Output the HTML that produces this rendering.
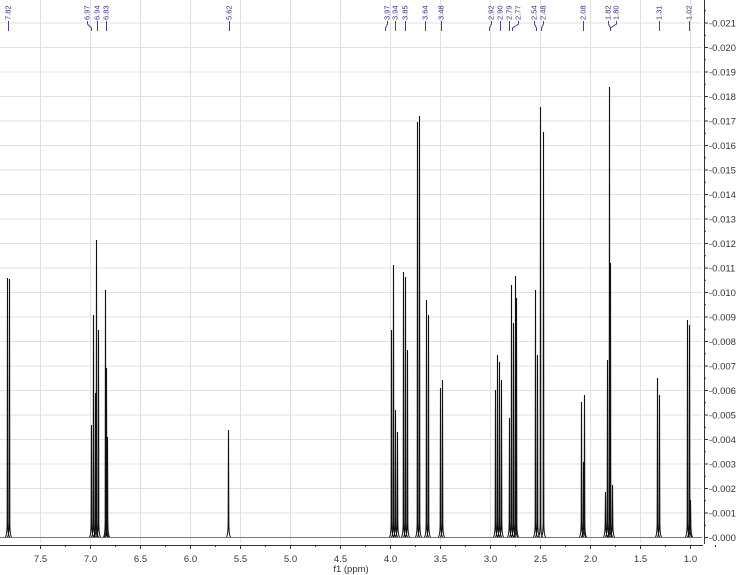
<!DOCTYPE html>
<html><head><meta charset="utf-8"><style>
html,body{margin:0;padding:0;background:#fff;width:750px;height:575px;overflow:hidden}
svg{display:block}
</style></head><body>
<svg width="750" height="575" xmlns="http://www.w3.org/2000/svg" font-family="Liberation Sans, sans-serif">
<rect width="750" height="575" fill="#fff"/>
<g stroke="#e0e0e0" stroke-width="1" id="grid"></g>
<line x1="0" y1="537.5" x2="702" y2="537.5" stroke="#777" stroke-width="1"/>
<g id="peaks" stroke="#111" stroke-width="1.1" fill="none"></g>
<g id="labels" fill="#33338a" font-size="7.5" stroke="none"></g>
<g id="llines" stroke="#44449a" stroke-width="1" fill="none"></g>
<line x1="704.5" y1="0" x2="704.5" y2="544" stroke="#333"/>
<line x1="0" y1="545.5" x2="703" y2="545.5" stroke="#333"/>
<g id="axes" font-size="9.5" fill="#333"></g>
<text x="351" y="572" font-size="9.5" fill="#333" text-anchor="middle">f1 (ppm)</text>
</svg>
<script>
var NS="http://www.w3.org/2000/svg";
function el(p,t,a,txt){var e=document.createElementNS(NS,t);for(var k in a)e.setAttribute(k,a[k]);if(txt)e.textContent=txt;document.getElementById(p).appendChild(e);return e;}
for(var k=0;k<=21;k++){var y=537.5-24.5*k;el('grid','line',{x1:0,y1:y,x2:702,y2:y});
 el('axes','line',{x1:704,y1:y,x2:708,y2:y,stroke:'#333'});
 el('axes','line',{x1:704,y1:y-12.25,x2:706,y2:y-12.25,stroke:'#333'});
 el('axes','text',{x:709,y:y+3.5},(k<10?'-0.00':'-0.0')+k);}
for(var i=0;i<14;i++){var x=40.5+50*i;el('grid','line',{x1:x,y1:0,x2:x,y2:543});
 el('axes','line',{x1:x,y1:545,x2:x,y2:549,stroke:'#333'});
 el('axes','line',{x1:x+25,y1:545,x2:x+25,y2:547,stroke:'#333'});
 el('axes','text',{x:x,y:562,'text-anchor':'middle'},(7.5-0.5*i).toFixed(1));}
var P=[[7,278],[9,279],[91,425],[93,315],[95,393],[96,240],[98,330],[105,290],[106,368],[107,437],
[228,430],[391,330],[393,265],[395,410],[397,432],[403,272],[405,277],[407,350],[417,122],[419,116],
[426,300],[428,315],[440,388],[442,380],[495,390],[497,355],[499,362],[501,380],[509,418],[511,285],[513,323],[515,276],[516,298],
[535,290],[537,355],[540,107],[543,132],[581,402],[583,462],[584,395],[605,492],[607,360],[609,87],[610,263],[612,485],
[657,378],[659,395],[687,320],[689,325],[690,500]];
P.forEach(function(p){var x=p[0]+.5;el('peaks','path',{d:'M'+(x-2.2)+' 537 Q'+(x-0.3)+' 536 '+(x-0.3)+' 520 L'+x+' '+p[1]+' L'+(x+0.3)+' 520 Q'+(x+0.3)+' 536 '+(x+2.2)+' 537'});});
var L=[[8,'7.82',8],[87,'6.97',91],[97,'6.94',97],[106,'6.83',106],[229,'5.62',229],[387,'3.97',385],[395,'3.94',395],[405,'3.85',405],[425,'3.64',425],[441,'3.48',441],
[491,'2.92',489],[500,'2.90',500],[509,'2.79',509],[518,'2.77',512],[534,'2.54',536],[543,'2.48',541],[583,'2.08',583],[608,'1.82',610],[616,'1.80',610],[659,'1.31',659],[689,'1.02',689]];
L.forEach(function(l){var x=l[0];el('labels','text',{x:0,y:0,transform:'translate('+(x+2.7)+',20) rotate(-90)'},l[1]);
 el('llines','path',{d:'M'+(x+.5)+' 21 L'+(x+.5)+' 24 L'+(l[2]+.5)+' 28 L'+(l[2]+.5)+' 31'});});
</script>
</body></html>
